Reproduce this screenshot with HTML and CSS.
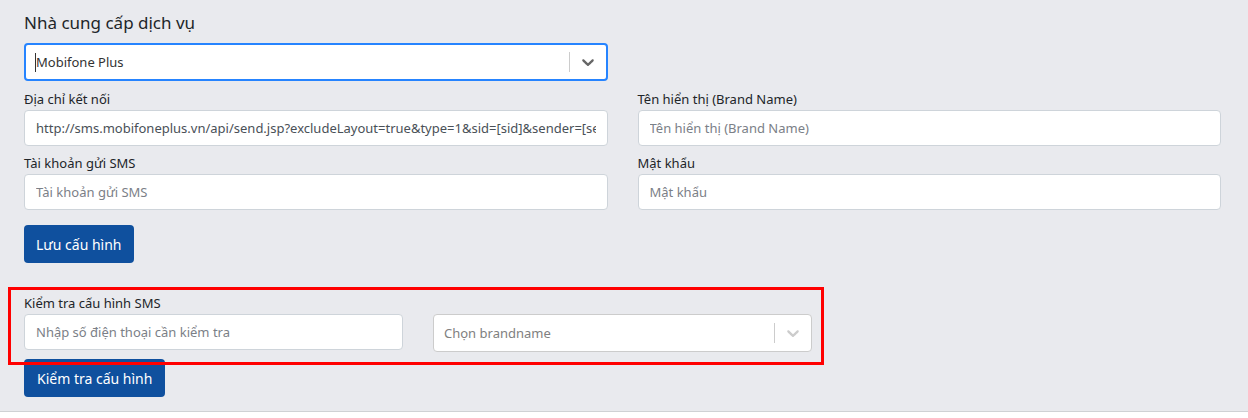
FILE: index.html
```html
<!DOCTYPE html>
<html lang="vi">
<head>
    <meta charset="UTF-8">
    <title>Cấu hình SMS</title>
    <link rel="stylesheet" href="styles.css">
</head>
<body>
<div class="sms-panel">
    <h4 class="provider-title">Nhà cung cấp dịch vụ</h4>
    <div class="rs-select rs-focused">
        <div class="rs-value"><span class="rs-caret"></span>Mobifone Plus</div>
        <span class="rs-sep"></span>
        <div class="rs-indicator">
            <svg width="20" height="20" viewBox="0 0 20 20"><path d="M4.516 7.548c0.436-0.446 1.043-0.481 1.576 0l3.908 3.747 3.908-3.747c0.533-0.481 1.141-0.446 1.574 0 0.436 0.445 0.408 1.197 0 1.615-0.406 0.418-4.695 4.502-4.695 4.502-0.217 0.223-0.502 0.335-0.787 0.335s-0.57-0.112-0.789-0.335c0 0-4.287-4.084-4.695-4.502s-0.436-1.170 0-1.615z"></path></svg>
        </div>
    </div>

    <div class="form-grid">
        <div class="form-group">
            <label class="field-label">Địa chỉ kết nối</label>
            <input class="field-input" type="text" value="http://sms.mobifoneplus.vn/api/send.jsp?excludeLayout=true&amp;type=1&amp;sid=[sid]&amp;sender=[sender]&amp;recipient=[phone]&amp;content=[content]">
        </div>
        <div class="form-group">
            <label class="field-label">Tên hiển thị (Brand Name)</label>
            <input class="field-input" type="text" placeholder="Tên hiển thị (Brand Name)">
        </div>
        <div class="form-group">
            <label class="field-label">Tài khoản gửi SMS</label>
            <input class="field-input" type="text" placeholder="Tài khoản gửi SMS">
        </div>
        <div class="form-group">
            <label class="field-label">Mật khẩu</label>
            <input class="field-input" type="password" placeholder="Mật khẩu">
        </div>
    </div>

    <button class="btn-primary save-btn">Lưu cấu hình</button>

    <div class="check-section">
        <div class="highlight-box"></div>
        <label class="field-label">Kiểm tra cấu hình SMS</label>
        <div class="check-grid">
            <input class="field-input" type="text" placeholder="Nhập số điện thoại cần kiểm tra">
            <div class="rs-select">
                <div class="rs-placeholder">Chọn brandname</div>
                <span class="rs-sep"></span>
                <div class="rs-indicator rs-muted">
                    <svg width="20" height="20" viewBox="0 0 20 20"><path d="M4.516 7.548c0.436-0.446 1.043-0.481 1.576 0l3.908 3.747 3.908-3.747c0.533-0.481 1.141-0.446 1.574 0 0.436 0.445 0.408 1.197 0 1.615-0.406 0.418-4.695 4.502-4.695 4.502-0.217 0.223-0.502 0.335-0.787 0.335s-0.57-0.112-0.789-0.335c0 0-4.287-4.084-4.695-4.502s-0.436-1.170 0-1.615z"></path></svg>
                </div>
            </div>
        </div>
        <button class="btn-primary check-btn">Kiểm tra cấu hình</button>
    </div>
</div>
</body>
</html>
```

FILE: styles.css
```css
body {
    margin: 0;
    background: #ffffff;
    font-family: "Noto Sans", "Open Sans", sans-serif;
    color: #212529;
}

.sms-panel {
    background: #e9eaee;
    padding: 11px 27px 14px 24px;
    border-bottom: 1px solid #cfd1d4;
}

.provider-title {
    margin: 0 0 9px 0;
    font-size: 17px;
    font-weight: 400;
    line-height: 23px;
    color: #212529;
}

/* react-select look */
.rs-select {
    display: flex;
    align-items: center;
    height: 38px;
    box-sizing: border-box;
    background: #fff;
    border: 1px solid #cccccc;
    border-radius: 4px;
}

.rs-focused {
    width: 584px;
    border: 2px solid #2684ff;
}

.rs-value,
.rs-placeholder {
    flex: 1;
    padding: 0 10px;
    font-size: 13px;
    color: #333;
    display: flex;
    align-items: center;
}

.rs-placeholder {
    color: #808080;
}

.rs-caret {
    display: inline-block;
    width: 1px;
    height: 19px;
    background: #333;
}

.rs-value {
    padding-left: 9px;
}

.rs-sep {
    width: 1px;
    height: 20px;
    background: #cccccc;
}

.rs-indicator {
    padding: 8px;
    display: flex;
    fill: #666666;
}

.rs-muted {
    fill: #cccccc;
}

.form-grid {
    display: grid;
    grid-template-columns: 1fr 1fr;
    column-gap: 30px;
    margin-top: 9px;
}

.form-group {
    margin-bottom: 8px;
}

.field-label {
    display: block;
    font-size: 13px;
    line-height: 18px;
    margin-bottom: 2px;
    color: #212529;
}

.field-input {
    display: block;
    width: 100%;
    height: 36px;
    box-sizing: border-box;
    padding: 0 11px;
    font-family: inherit;
    font-size: 13px;
    color: #495057;
    background: #fff;
    border: 1px solid #ced4da;
    border-radius: 4px;
    outline: none;
}

.field-input::placeholder {
    color: #7b8087;
}

.btn-primary {
    display: block;
    height: 38px;
    padding: 0 12px;
    font-family: inherit;
    font-size: 14px;
    color: #fff;
    background: #0f509e;
    border: none;
    border-radius: 4px;
}

.save-btn {
    margin-top: 7px;
}

.check-section {
    position: relative;
    margin-top: 31px;
}

.check-grid {
    display: grid;
    grid-template-columns: repeat(3, 1fr);
    column-gap: 30px;
}

.check-btn {
    margin-top: 7px;
    padding: 0 13px;
}

/* red annotation frame drawn over the test block */
.highlight-box {
    position: absolute;
    left: -16px;
    top: -7px;
    width: 816px;
    height: 78px;
    box-sizing: border-box;
    border: 3px solid #ff0000;
    pointer-events: none;
}
```
